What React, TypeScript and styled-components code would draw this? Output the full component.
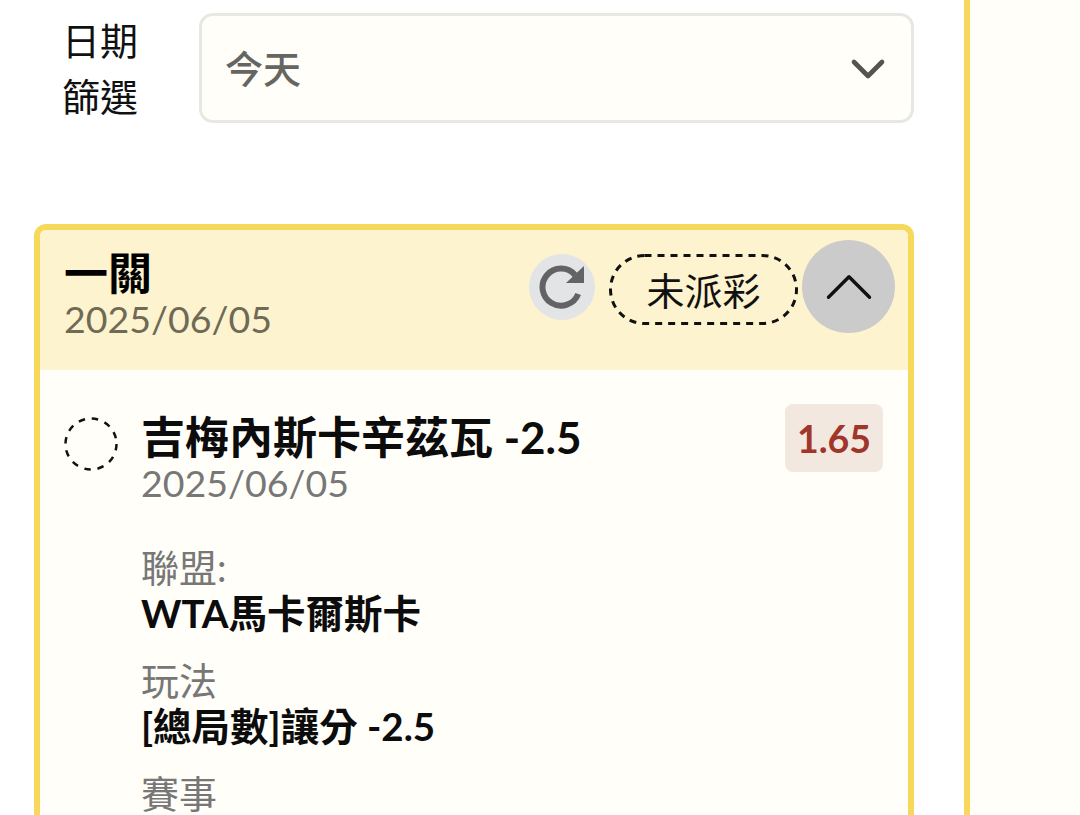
import styled, { createGlobalStyle } from "styled-components";
import { ChevronDown, ChevronUp } from "lucide-react";

const GlobalStyle = createGlobalStyle`
  html, body {
    margin: 0;
    height: 815px;
    overflow: hidden;
    background: #fff;
    font-family: Lato, "Noto Sans CJK TC", sans-serif;
  }
`;

const Page = styled.div`
  display: flex;
  height: 815px;
  overflow: hidden;
`;

const Main = styled.main`
  width: 880px;
  flex-shrink: 0;
  padding: 12px 50px 0 34px;
`;

const Side = styled.aside`
  flex: 1;
  background: #fffef8;
  border-left: 6px solid #f6d95b;
`;

const FilterRow = styled.div`
  display: flex;
  align-items: center;
  margin-bottom: 100px;
`;

const FilterLabel = styled.label`
  width: 76px;
  margin: 0 61px 0 28px;
  font-size: 38px;
  line-height: 56px;
  text-align: center;
  color: #111;
`;

const Select = styled.div`
  flex: 1;
  height: 110px;
  box-sizing: border-box;
  display: flex;
  align-items: center;
  justify-content: space-between;
  padding: 0 15px 4px 23px;
  background: #fffef8;
  border: 3px solid #e8e8e2;
  border-radius: 14px;
  font-size: 38px;
  font-weight: 500;
  color: #666660;
`;

const SelectArrow = styled(ChevronDown)`
  margin-top: 6px;
`;

const Card = styled.section`
  min-height: 640px;
  border: 6px solid #f6d95b;
  border-bottom: none;
  border-radius: 12px 12px 0 0;
  background: #fffef8;
`;

const CardHeader = styled.header`
  height: 140px;
  box-sizing: border-box;
  display: flex;
  align-items: flex-start;
  justify-content: space-between;
  padding: 19px 13px 0 24px;
  background: #fdf3cf;
  border-radius: 6px 6px 0 0;
`;

const Title = styled.h2`
  margin: 0;
  font-size: 44px;
  line-height: 48px;
  font-weight: 700;
  color: #000;
`;

const HeaderDate = styled.div`
  font-size: 37.5px;
  line-height: 44px;
  color: #6f6a55;
`;

const Actions = styled.div`
  display: flex;
  align-items: center;
  margin-top: -9px;
`;

const RefreshButton = styled.button`
  width: 66px;
  height: 66px;
  padding: 0;
  margin-right: 14px;
  display: flex;
  align-items: center;
  justify-content: center;
  border: none;
  border-radius: 50%;
  background: #e2e4e6;
  color: #636366;
`;

const StatusPill = styled.span`
  position: relative;
  width: 189px;
  height: 71px;
  box-sizing: border-box;
  display: flex;
  align-items: center;
  justify-content: center;
  margin: 6px 4px 0 0;
  padding-bottom: 2px;
  font-size: 38px;
  color: #111;
`;

const PillOutline = styled.svg`
  position: absolute;
  inset: 0;
`;

const CollapseButton = styled.button`
  width: 93px;
  height: 93px;
  padding: 0;
  display: flex;
  align-items: center;
  justify-content: center;
  border: none;
  border-radius: 50%;
  background: #cbcbcb;
  color: #111;
`;

const Bet = styled.article`
  display: grid;
  grid-template-columns: 54px 1fr auto;
  column-gap: 23px;
  padding: 34px 25px 0 24px;
`;

const Radio = styled.svg`
  margin-top: 13px;
`;

const BetTitle = styled.h3`
  margin: 8px 0 0;
  font-size: 44px;
  line-height: 50px;
  font-weight: 700;
  color: #0c0c0c;
`;

const BetDate = styled.div`
  margin-bottom: 40px;
  font-size: 37.5px;
  line-height: 42px;
  color: #777;
`;

const Odds = styled.span`
  width: 98px;
  height: 68px;
  display: flex;
  align-items: center;
  justify-content: center;
  border-radius: 8px;
  background: #f3e8e0;
  color: #a0352a;
  font-size: 37.5px;
  font-weight: 700;
`;

const FieldLabel = styled.div`
  font-size: 38px;
  line-height: 46px;
  color: #777;
`;

const FieldValue = styled.div`
  margin-bottom: 21px;
  font-size: 38.5px;
  line-height: 46px;
  font-weight: 700;
  color: #0c0c0c;
`;

const fields = [
  { label: "聯盟:", value: "WTA馬卡爾斯卡" },
  { label: "玩法", value: "[總局數]讓分 -2.5" },
  { label: "賽事", value: "" },
];

export default function App() {
  return (
    <>
      <GlobalStyle />
      <Page>
        <Main>
          <FilterRow>
            <FilterLabel>日期篩選</FilterLabel>
            <Select>
              今天
              <SelectArrow size={56} strokeWidth={2} color="#555550" />
            </Select>
          </FilterRow>
          <Card>
            <CardHeader>
              <div>
                <Title>一關</Title>
                <HeaderDate>2025/06/05</HeaderDate>
              </div>
              <Actions>
                <RefreshButton aria-label="refresh">
                  <svg width="46" height="46" viewBox="0 0 46 46">
                    <path
                      d="M36 11A18.5 18.5 0 1 0 39.2 30"
                      fill="none"
                      stroke="currentColor"
                      strokeWidth="6"
                    />
                    <path d="M45 2v17H27z" fill="currentColor" />
                  </svg>
                </RefreshButton>
                <StatusPill>
                  <PillOutline width="189" height="71">
                    <rect
                      x="1.5"
                      y="1.5"
                      width="186"
                      height="68"
                      rx="34"
                      fill="none"
                      stroke="#111"
                      strokeWidth="3"
                      strokeDasharray="7 6"
                    />
                  </PillOutline>
                  未派彩
                </StatusPill>
                <CollapseButton aria-label="collapse">
                  <ChevronUp size={82} strokeWidth={1} />
                </CollapseButton>
              </Actions>
            </CardHeader>
            <Bet>
              <Radio width="54" height="54">
                <circle
                  cx="27"
                  cy="27"
                  r="25.5"
                  fill="none"
                  stroke="#111"
                  strokeWidth="2.5"
                  strokeDasharray="6.5 6.85"
                />
              </Radio>
              <div>
                <BetTitle>吉梅內斯卡辛茲瓦 -2.5</BetTitle>
                <BetDate>2025/06/05</BetDate>
                {fields.map((field) => (
                  <div key={field.label}>
                    <FieldLabel>{field.label}</FieldLabel>
                    {field.value ? <FieldValue>{field.value}</FieldValue> : null}
                  </div>
                ))}
              </div>
              <Odds>1.65</Odds>
            </Bet>
          </Card>
        </Main>
        <Side />
      </Page>
    </>
  );
}
